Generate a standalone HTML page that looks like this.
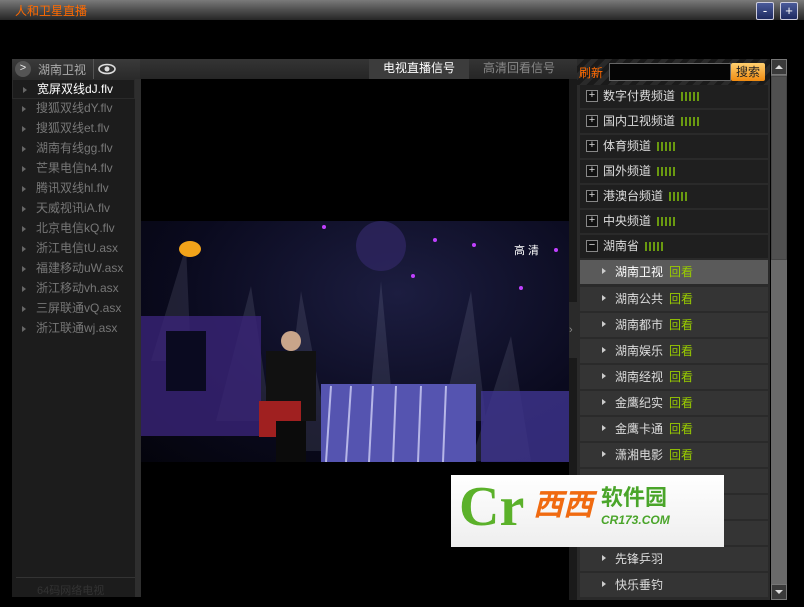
<!DOCTYPE html>
<html><head><meta charset="utf-8"><style>
*{margin:0;padding:0;box-sizing:border-box}
body{width:804px;height:607px;background:#000;position:relative;overflow:hidden;font-family:"Liberation Sans","Noto Sans CJK SC",sans-serif;font-size:12px}
.abs{position:absolute}
#title{left:0;top:0;width:804px;height:20px;background:linear-gradient(#7a7a7a,#4a4a4a 55%,#262626)}
#title span{position:absolute;left:15px;top:2px;color:#ff6a00;font-size:12px}
.wb{top:2px;width:18px;height:18px;border:1px solid #ccd;border-radius:2px;background:linear-gradient(#4a5a9a,#1e2a60);color:#fff;text-align:center;line-height:15px;font-size:13px}
#lhead{left:12px;top:59px;width:128px;height:20px;background:linear-gradient(#3a3a3a,#2a2a2a)}
#tabs{left:140px;top:59px;width:437px;height:20px;background:linear-gradient(#343434,#262626)}
.tab{top:59px;height:20px;line-height:18px;text-align:center;font-size:12px}
#list{left:12px;top:79px;width:123px;height:518px;background:#1c1c1c}
#lsep{left:135px;top:79px;width:6px;height:518px;background:#2e2e2e}
.li{position:absolute;left:0;width:123px;height:20px;line-height:19px;color:#777;padding-left:24px}
.li:before{content:"";position:absolute;left:10px;top:7px;border-left:4px solid #666;border-top:3px solid transparent;border-bottom:3px solid transparent}
#video{left:141px;top:221px;width:428px;height:241px;background:radial-gradient(ellipse at 60% 30%,#1c1d40,#0a0a1e 60%,#04040c);overflow:hidden}
#split{left:569px;top:79px;width:8px;height:521px;background:#1a1a1a}
#rp{left:577px;top:59px;width:193px;height:541px;background:#2a2a2a}
.cat{position:absolute;left:580px;width:188px;height:23px;background:#1f1f1f;color:#ddd;line-height:22px;padding-left:23px}
.cat i{position:absolute;left:6px;top:5px;width:12px;height:12px;border:1px solid #888;background:#111;color:#ddd;font-style:normal;font-size:11px;line-height:9px;text-align:center}
.bars{display:inline-block;margin-left:6px;width:18px;height:9px;vertical-align:-1px;background:repeating-linear-gradient(90deg,#6a9a10 0 2px,transparent 2px 4px)}
.sub{position:absolute;left:580px;width:188px;height:24px;background:#343434;color:#ddd;line-height:24px;padding-left:35px}
.sub:before{content:"";position:absolute;left:22px;top:8px;border-left:4px solid #ccc;border-top:3px solid transparent;border-bottom:3px solid transparent}
.sub b{font-weight:normal;color:#9c0;margin-left:6px}
#sb{left:771px;top:59px;width:16px;height:541px;background:#6a6a6a}
</style></head><body>
<div id="title" class="abs"><span>人和卫星直播</span></div>
<div class="abs wb" style="left:756px">-</div>
<div class="abs wb" style="left:780px">+</div>

<div id="lhead" class="abs">
 <div class="abs" style="left:3px;top:2px;width:16px;height:16px;border-radius:8px;background:#555;color:#eee;text-align:center;line-height:15px;font-size:11px">&gt;</div>
 <div class="abs" style="left:26px;top:2px;color:#aaa">湖南卫视</div>
 <div class="abs" style="left:81px;top:0;width:1px;height:20px;background:#555"></div>
 <svg class="abs" style="left:86px;top:4px" width="18" height="12"><ellipse cx="9" cy="6" rx="8" ry="4.5" fill="none" stroke="#ddd" stroke-width="1.6"/><circle cx="9" cy="6" r="2.5" fill="#ddd"/></svg>
</div>
<div id="tabs" class="abs"></div>
<div class="abs tab" style="left:369px;width:100px;background:#3c3c3c;color:#fff">电视直播信号</div>
<div class="abs tab" style="left:470px;width:98px;color:#888">高清回看信号</div>

<div id="list" class="abs">
 <div class="li" style="top:0;color:#fff;border:1px solid #2a2a2a">宽屏双线dJ.flv</div>
 <div class="li" style="top:20px">搜狐双线dY.flv</div>
 <div class="li" style="top:40px">搜狐双线et.flv</div>
 <div class="li" style="top:60px">湖南有线gg.flv</div>
 <div class="li" style="top:80px">芒果电信h4.flv</div>
 <div class="li" style="top:100px">腾讯双线hl.flv</div>
 <div class="li" style="top:120px">天威视讯iA.flv</div>
 <div class="li" style="top:140px">北京电信kQ.flv</div>
 <div class="li" style="top:160px">浙江电信tU.asx</div>
 <div class="li" style="top:180px">福建移动uW.asx</div>
 <div class="li" style="top:200px">浙江移动vh.asx</div>
 <div class="li" style="top:220px">三屏联通vQ.asx</div>
 <div class="li" style="top:240px">浙江联通wj.asx</div>
 <div class="abs" style="left:4px;top:498px;width:119px;height:1px;background:#333"></div>
 <div class="abs" style="left:25px;top:503px;color:#333;font-size:11px">64码网络电视</div>
</div>
<div id="lsep" class="abs"></div>

<div id="video" class="abs">
 <svg width="428" height="241">
  <g fill="#dde4ff" opacity=".1">
   <polygon points="45,25 10,140 50,140"/><polygon points="110,65 75,200 130,200"/><polygon points="160,70 140,230 190,230"/><polygon points="370,115 330,240 390,240"/><polygon points="330,70 300,200 345,200"/><polygon points="240,60 225,220 255,220"/>
  </g>
  <rect x="0" y="95" width="120" height="120" fill="#3a2478" opacity=".8"/>
  <rect x="25" y="110" width="40" height="60" fill="#0a0a20"/>
  <rect x="180" y="163" width="155" height="78" fill="#5554b0"/>
  <g stroke="#e0e0ff" stroke-width="2" opacity=".7"><line x1="190" y1="165" x2="185" y2="241"/><line x1="210" y1="165" x2="205" y2="241"/><line x1="232" y1="165" x2="228" y2="241"/><line x1="255" y1="165" x2="252" y2="241"/><line x1="280" y1="165" x2="277" y2="241"/><line x1="305" y1="165" x2="302" y2="241"/></g>
  <rect x="340" y="170" width="88" height="71" fill="#3f3490" opacity=".8"/>
  <rect x="125" y="130" width="50" height="70" fill="#111"/>
  <rect x="118" y="180" width="42" height="36" fill="#a02020"/>
  <circle cx="150" cy="120" r="10" fill="#c9a58a"/>
  <rect x="135" y="200" width="30" height="41" fill="#0b0b0b"/>
  <ellipse cx="49" cy="28" rx="11" ry="8" fill="#f2a31a"/>
  <g fill="#c040ff"><circle cx="183" cy="6" r="2"/><circle cx="294" cy="19" r="2"/><circle cx="333" cy="24" r="2"/><circle cx="272" cy="55" r="2"/><circle cx="415" cy="29" r="2"/><circle cx="380" cy="67" r="2"/></g>
  <circle cx="240" cy="25" r="25" fill="#2e2660" opacity=".8"/>
  <text x="373" y="33" fill="#fff" font-size="11" font-family="Liberation Sans,Noto Sans CJK SC,sans-serif">高 清</text>
 </svg>
</div>
<div id="split" class="abs"><div class="abs" style="left:0;top:223px;width:8px;height:56px;background:#2a2a2a;color:#888;font-size:11px;line-height:56px">›</div></div>

<div id="rp" class="abs">
 <div class="abs" style="left:0;top:0;width:193px;height:26px;background:repeating-linear-gradient(135deg,#2a2a2a 0 5px,#1a1a1a 5px 10px)"></div>
 <div class="abs" style="left:2px;top:5px;color:#ff6a00">刷新</div>
 <div class="abs" style="left:32px;top:4px;width:122px;height:18px;background:#050505;border:1px solid #666"></div>
 <div class="abs" style="left:154px;top:4px;width:34px;height:18px;background:linear-gradient(#ffd070,#f08a10);border-radius:2px;color:#222;text-align:center;line-height:18px">搜索</div>
</div>

<div class="cat" style="top:85px"><i>+</i>数字付费频道<span class="bars"></span></div>
<div class="cat" style="top:110px"><i>+</i>国内卫视频道<span class="bars"></span></div>
<div class="cat" style="top:135px"><i>+</i>体育频道<span class="bars"></span></div>
<div class="cat" style="top:160px"><i>+</i>国外频道<span class="bars"></span></div>
<div class="cat" style="top:185px"><i>+</i>港澳台频道<span class="bars"></span></div>
<div class="cat" style="top:210px"><i>+</i>中央频道<span class="bars"></span></div>
<div class="cat" style="top:235px"><i>−</i>湖南省<span class="bars"></span></div>
<div class="sub" style="top:260px;background:#5a5a5a;color:#fff">湖南卫视<b>回看</b></div>
<div class="sub" style="top:287px">湖南公共<b>回看</b></div>
<div class="sub" style="top:313px">湖南都市<b>回看</b></div>
<div class="sub" style="top:339px">湖南娱乐<b>回看</b></div>
<div class="sub" style="top:365px">湖南经视<b>回看</b></div>
<div class="sub" style="top:391px">金鹰纪实<b>回看</b></div>
<div class="sub" style="top:417px">金鹰卡通<b>回看</b></div>
<div class="sub" style="top:443px">潇湘电影<b>回看</b></div>
<div class="sub" style="top:469px"></div>
<div class="sub" style="top:495px"></div>
<div class="sub" style="top:521px"></div>
<div class="sub" style="top:547px">先锋乒羽</div>
<div class="sub" style="top:573px">快乐垂钓</div>

<div id="sb" class="abs">
 <div class="abs" style="left:0;top:0;width:16px;height:16px;background:#3a3a3a;border:1px solid #777"><div class="abs" style="left:3px;top:5px;border-bottom:4px solid #ddd;border-left:4px solid transparent;border-right:4px solid transparent"></div></div>
 <div class="abs" style="left:0;top:17px;width:16px;height:184px;background:#505050;border:1px solid #444"></div>
 <div class="abs" style="left:0;top:525px;width:16px;height:16px;background:#3a3a3a;border:1px solid #777"><div class="abs" style="left:3px;top:5px;border-top:4px solid #ddd;border-left:4px solid transparent;border-right:4px solid transparent"></div></div>
</div>

<div class="abs" style="left:451px;top:475px;width:273px;height:72px;background:linear-gradient(#fff,#eee)">
 <div class="abs" style="left:8px;top:2px;color:#5bb12a;font-size:56px;font-family:'Liberation Serif',serif;line-height:60px;font-weight:bold">Cr</div>
 <div class="abs" style="left:82px;top:14px;color:#f06a10;font-size:30px;font-weight:bold;font-style:italic;line-height:34px">西西</div>
 <div class="abs" style="left:150px;top:10px;color:#4aa52a;font-size:22px;font-weight:bold;line-height:26px">软件园</div>
 <div class="abs" style="left:150px;top:38px;color:#4aa52a;font-size:12px;font-weight:bold;font-style:italic">CR173.COM</div>
</div>
</body></html>
